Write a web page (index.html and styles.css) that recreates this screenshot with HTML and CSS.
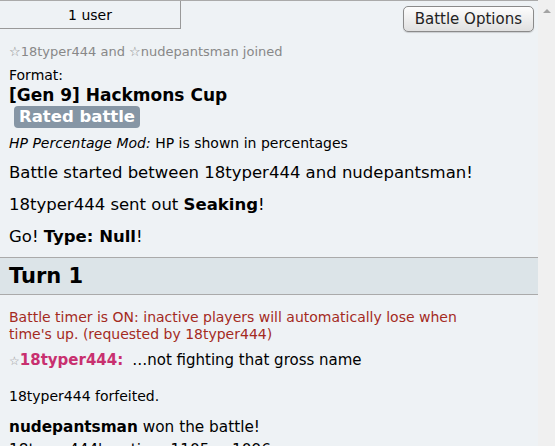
FILE: index.html
```html
<!DOCTYPE html>
<html>
<head>
<meta charset="utf-8">
<link rel="stylesheet" href="styles.css">
</head>
<body>
<div class="frame">
  <div class="log">
    <div class="topbar">
      <div class="users">1 user</div>
      <button class="opts">Battle Options</button>
    </div>
    <div class="joined">☆18typer444 and ☆nudepantsman joined</div>
    <div class="format">
      <div class="label">Format:</div>
      <div class="tier">[Gen 9] Hackmons Cup</div>
      <div class="ratedrow"><span class="rated">Rated battle</span></div>
    </div>
    <div class="small hp"><em>HP Percentage Mod:</em> HP is shown in percentages</div>
    <p class="big first">Battle started between 18typer444 and nudepantsman!</p>
    <p class="big">18typer444 sent out <strong>Seaking</strong>!</p>
    <p class="big">Go! <strong>Type: Null</strong>!</p>
    <h2 class="turn">Turn 1</h2>
    <div class="timer">Battle timer is ON: inactive players will automatically lose when time's up. (requested by 18typer444)</div>
    <div class="chat"><strong class="name"><span class="star">☆</span>18typer444:</strong><span class="said">…not fighting that gross name</span></div>
    <div class="small forfeit">18typer444 forfeited.</div>
    <p class="end"><strong>nudepantsman</strong> won the battle!</p>
    <p class="end rating">18typer444's rating: 1105 → 1096</p>
  </div>
  <div class="scrollbar"><span class="arrow"></span></div>
</div>
</body>
</html>
```
FILE: styles.css
```css
html, body {
  margin: 0;
  padding: 0;
}
body {
  font-family: "DejaVu Sans", Verdana, sans-serif;
  color: #000;
  background: #f0f0f0;
}
.frame {
  display: flex;
  height: 446px;
  overflow: hidden;
}
.log {
  flex: 1;
  background: #eef2f5;
  border-top: 1px solid #aaa;
  overflow: hidden;
}
.scrollbar {
  width: 17px;
  background: #f0f0f0;
  display: flex;
  justify-content: center;
  padding-top: 9px;
  box-sizing: border-box;
}
.arrow {
  width: 0;
  height: 0;
  border-left: 4px solid transparent;
  border-right: 4px solid transparent;
  border-bottom: 4px solid #a3a3a3;
}
.topbar {
  display: flex;
  justify-content: space-between;
  align-items: flex-start;
  height: 33px;
}
.users {
  width: 181px;
  height: 28px;
  box-sizing: border-box;
  border-right: 1px solid #999;
  border-bottom: 1px solid #999;
  font-size: 14px;
  text-align: center;
  padding-top: 2px;
  line-height: 25px;
}
.opts {
  margin: 5px 4px 0 0;
  height: 26px;
  padding: 0 11px;
  font-family: "DejaVu Sans", Verdana, sans-serif;
  font-size: 15px;
  color: #222;
  border: 1px solid #8a8a8a;
  border-radius: 5px;
  background: linear-gradient(#fdfdfd, #e0e0e0);
  box-shadow: 0 1px 1px rgba(0,0,0,0.15);
}
.joined {
  font-size: 13px;
  line-height: 16px;
  color: #888;
  padding: 10px 9px 0;
}
.format {
  padding: 6px 9px 0;
}
.label {
  font-size: 14px;
  line-height: 18px;
}
.tier {
  font-size: 17px;
  font-weight: bold;
  line-height: 22px;
}
.ratedrow {
  height: 22px;
}
.rated {
  display: inline-block;
  margin-left: 5px;
  padding: 0 5px;
  background: #8696a5;
  color: #fff;
  border-radius: 4px;
  font-weight: bold;
  font-size: 16.5px;
  line-height: 22px;
}
.small {
  font-size: 14px;
  line-height: 18px;
  padding: 6px 9px 0;
}
.big {
  font-size: 16.5px;
  margin: 0;
  padding: 12px 9px 0;
  line-height: 20px;
}
.big.first {
  padding-top: 11px;
}
.turn {
  margin: 10px 0 0;
  padding: 5px 9px 5px;
  font-size: 21px;
  line-height: 26px;
  background: #dce4e8;
  border-top: 1px solid #aaa;
  border-bottom: 1px solid #aaa;
}
.timer {
  color: #a42a1e;
  font-size: 14px;
  line-height: 17px;
  padding: 14px 45px 0 9px;
}
.chat {
  padding: 7px 9px 0;
  font-size: 15px;
  line-height: 20px;
}
.name {
  color: #c8306f;
  font-size: 15px;
}
.star {
  color: #999;
  font-weight: normal;
  font-size: 12px;
}
.said {
  margin-left: 9px;
}
.forfeit {
  padding-top: 16px;
}
.end {
  margin: 0;
  font-size: 15.3px;
  line-height: 19px;
  padding: 13px 9px 0;
}
.end.rating {
  padding-top: 4px;
}
```
